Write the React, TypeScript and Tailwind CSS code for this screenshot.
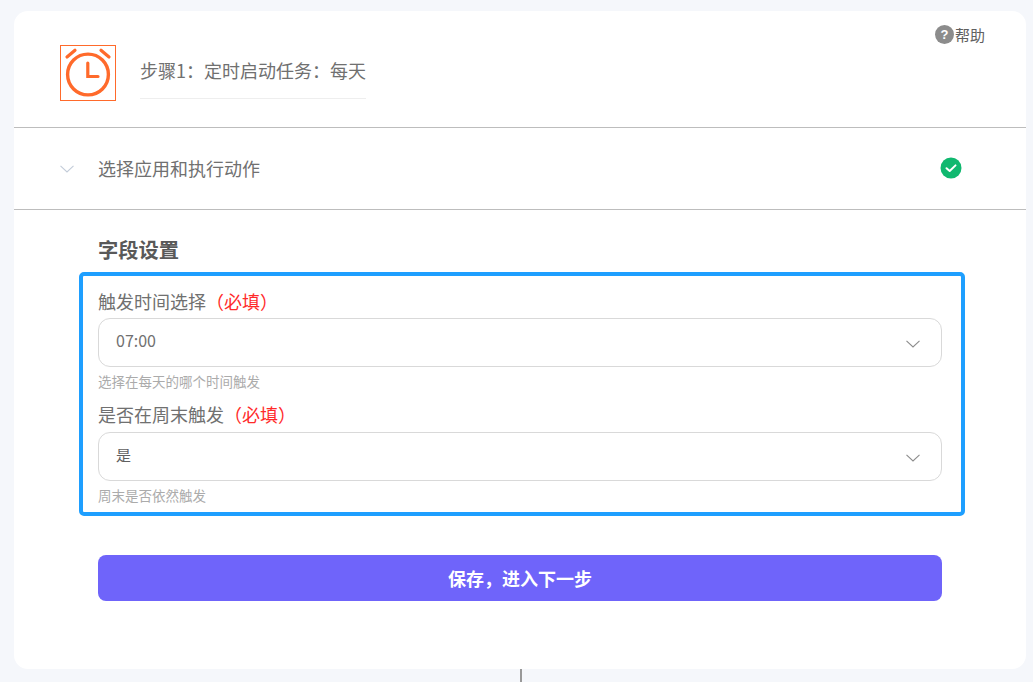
import React from "react";

function Chevron({ className }: { className: string }) {
  return (
    <svg className={className} viewBox="0 0 14 8" fill="none" stroke="currentColor" strokeWidth="1.1">
      <path d="M0.5 0.8 L7 7 L13.5 0.8" />
    </svg>
  );
}

function Field({ label, value, hint, valueClass, labelClass }: { label: string; value: string; hint: string; valueClass: string; labelClass: string }) {
  return (
    <div className="flex flex-col">
      <div className={labelClass}>
        {label}
        <span className="text-[#ff2a2a]">（必填）</span>
      </div>
      <div className="flex h-[49px] items-center justify-between rounded-[12px] border border-[#d9d9d9] bg-white pl-[17px] pr-[21px]">
        <span className={valueClass}>{value}</span>
        <Chevron className="mt-[2px] h-[8px] w-[14px] text-[#8c8c8c]" />
      </div>
      <div className="mt-[5px] h-[18px] text-[13.5px] leading-[18px] text-[#ababab]">{hint}</div>
    </div>
  );
}

export default function App() {
  return (
    <div className="flex h-[682px] flex-col items-center overflow-hidden bg-[#f5f7fb] pt-[11px] font-['Noto_Sans_CJK_SC','Noto_Sans',sans-serif]">
      <div className="ml-[7px] flex h-[658px] w-[1012px] shrink-0 flex-col rounded-[14px] bg-white">
        <div className="flex h-[117px] shrink-0 justify-between border-b border-[#bdbdbd] pl-[46px] pr-[41px]">
          <div className="flex items-start pt-[34px]">
            <div className="flex h-[56px] w-[56px] items-center justify-center border border-[#ff6a2b]">
              <svg width="54" height="54" viewBox="0 0 54 54" fill="none" stroke="#ff6a2b" strokeLinecap="round">
                <circle cx="27" cy="28.5" r="20.4" strokeWidth="3.4" />
                <path d="M26.8 17 V30.5 H37" strokeWidth="3.2" />
                <path d="M6 11 L14 4.2 M48 11 L40 4.2" strokeWidth="3.2" />
              </svg>
            </div>
            <div className="ml-[24px] mt-[8px] h-[46px] w-[226px] border-b border-[#eeeeee] pt-[4px] text-[18px] leading-[27px] text-[#707070]">
              步骤1：定时启动任务：每天
            </div>
          </div>
          <div className="flex items-start self-start pt-[14px]">
            <div className="flex h-[19px] w-[19px] items-center justify-center rounded-full bg-[#8c8c8c] font-['Liberation_Sans',sans-serif] text-[13px] font-bold leading-none text-white">?</div>
            <span className="ml-[1px] text-[15px] leading-[19px] text-[#606060]">帮助</span>
          </div>
        </div>

        <div className="flex h-[82px] shrink-0 items-center justify-between border-b border-[#bdbdbd] pl-[46px] pr-[64px]">
          <div className="flex items-center">
            <Chevron className="h-[8px] w-[14px] text-[#c3ccd9]" />
            <span className="ml-[24px] text-[18px] leading-[27px] text-[#707070]">选择应用和执行动作</span>
          </div>
          <svg width="22" height="22" viewBox="0 0 22 22" className="mb-[2px]">
            <circle cx="11" cy="11" r="10.5" fill="#10b86f" />
            <path d="M6.5 11.2 L9.7 14 L15.5 8.4" fill="none" stroke="#ffffff" strokeWidth="2" strokeLinecap="round" strokeLinejoin="round" />
          </svg>
        </div>

        <div className="flex flex-col pl-[65px]">
          <div className="ml-[19px] mt-[24px] text-[20.3px] font-bold leading-[30px] text-[#595959]">字段设置</div>
          <div className="mt-[8px] flex h-[244px] w-[886px] flex-col gap-[11px] rounded-[5px] border-[4px] border-[#1e9fff] pl-[15px] pr-[19px] pt-[12px]">
            <Field labelClass="h-[30px] text-[18px] leading-[27px] text-[#707070]" label="触发时间选择" value="07:00" hint="选择在每天的哪个时间触发" valueClass="pb-[5px] text-[16px] leading-[24px] text-[#707070]" />
            <Field labelClass="h-[31px] text-[18px] leading-[27px] text-[#707070]" label="是否在周末触发" value="是" hint="周末是否依然触发" valueClass="pb-[4px] text-[15px] leading-[22px] text-[#606060]" />
          </div>
          <button className="ml-[19px] mt-[39px] flex h-[46px] w-[844px] items-center justify-center rounded-[8px] bg-[#6f64fa] text-[18px] font-bold text-white">
            保存，进入下一步
          </button>
        </div>
      </div>
      <div className="ml-[9px] h-[13px] w-[2px] shrink-0 bg-[#999999]" />
    </div>
  );
}
